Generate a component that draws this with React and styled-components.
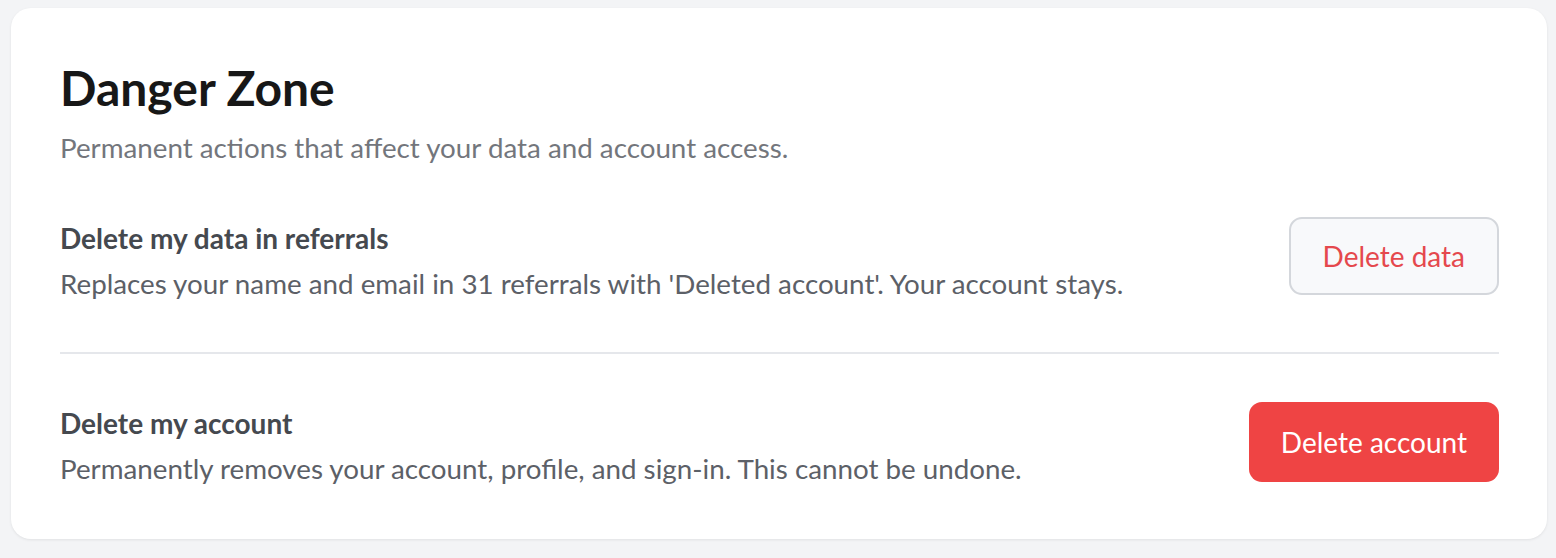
import React from "react";
import styled, { createGlobalStyle } from "styled-components";

const Global = createGlobalStyle`
  html, body { margin: 0; padding: 0; background: #f3f4f6; }
  body { font-family: Lato, "Open Sans", sans-serif; }
  * { box-sizing: border-box; }
`;

const Page = styled.div`
  padding: 8px 9px 20px 11px;
  background: #f3f4f6;
`;

const Card = styled.section`
  background: #ffffff;
  border-radius: 20px;
  box-shadow: 0 1px 3px rgba(0, 0, 0, 0.08);
  padding: 51px 48px 0 49px;
  display: flex;
  flex-direction: column;
`;

const Title = styled.h2`
  margin: 0;
  font-size: 48px;
  line-height: 1.2;
  font-weight: 700;
  color: #171717;
`;

const Subtitle = styled.p`
  margin: 10px 0 0;
  font-size: 27.75px;
  line-height: 42px;
  color: #73767c;
`;

const Row = styled.div`
  display: flex;
  align-items: flex-start;
  justify-content: space-between;
  gap: 32px;
  padding: ${(p) => (p.$divider ? "48px 0 47px" : "48px 0 49px")};
  border-bottom: ${(p) => (p.$divider ? "2px solid #e5e7eb" : "none")};
`;

const Info = styled.div`
  display: flex;
  flex-direction: column;
  gap: 4px;
`;

const RowTitle = styled.div`
  font-size: 28px;
  line-height: 42px;
  font-weight: 700;
  color: #45494f;
`;

const RowText = styled.div`
  font-size: 27.75px;
  line-height: 42px;
  color: #5c6067;
`;

const Button = styled.button`
  font-family: inherit;
  font-size: 28px;
  line-height: 1;
  border-radius: 13px;
  cursor: pointer;
  padding: 0 32px;
  height: ${(p) => (p.$danger ? "80px" : "78px")};
  border: ${(p) => (p.$danger ? "none" : "2px solid #d4d7dc")};
  background: ${(p) => (p.$danger ? "#ef4444" : "#f8f9fb")};
  color: ${(p) => (p.$danger ? "#ffffff" : "#e5484d")};
  white-space: nowrap;
  flex-shrink: 0;
`;

export default function App() {
  return (
    <Page>
      <Global />
      <Card>
        <Title>Danger Zone</Title>
        <Subtitle>Permanent actions that affect your data and account access.</Subtitle>
        <Row $divider>
          <Info>
            <RowTitle>Delete my data in referrals</RowTitle>
            <RowText>Replaces your name and email in 31 referrals with 'Deleted account'. Your account stays.</RowText>
          </Info>
          <Button>Delete data</Button>
        </Row>
        <Row>
          <Info>
            <RowTitle>Delete my account</RowTitle>
            <RowText>Permanently removes your account, profile, and sign-in. This cannot be undone.</RowText>
          </Info>
          <Button $danger>Delete account</Button>
        </Row>
      </Card>
    </Page>
  );
}
